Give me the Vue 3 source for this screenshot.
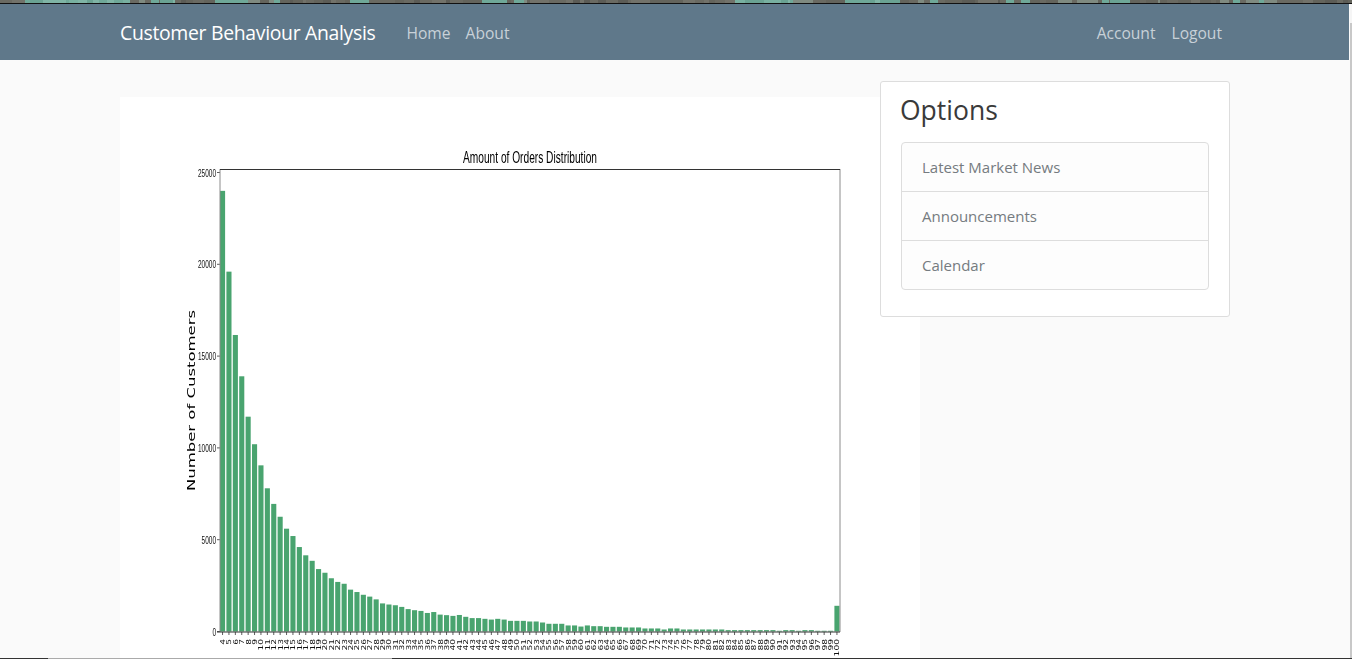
<template>
  <div class="screen">
    <!-- sliver of the desktop wallpaper above the window -->
    <svg class="strip" width="1352" height="3" aria-hidden="true">
      <rect v-for="s in stripCells" :key="s.x" :x="s.x" y="0" :width="s.w" height="3" :fill="s.fill" />
    </svg>
    <div class="window">
      <div class="page">
        <header class="navbar">
          <a class="brand">Customer Behaviour Analysis</a>
          <nav class="nav-left">
            <a class="nav-link">Home</a>
            <a class="nav-link">About</a>
          </nav>
          <nav class="nav-right">
            <a class="nav-link">Account</a>
            <a class="nav-link">Logout</a>
          </nav>
        </header>
        <main class="container">
          <div class="col-main">
            <div class="chart">
              <svg width="800" height="562" viewBox="120 97 800 562" class="plot">
                <text x="530" y="162.5" text-anchor="middle" textLength="134" lengthAdjust="spacingAndGlyphs" class="title">Amount of Orders Distribution</text>
                <text transform="translate(195 491) rotate(-90)" textLength="181" lengthAdjust="spacingAndGlyphs" class="ylabel">Number of Customers</text>

                <g v-for="t in yTicks" :key="t.label">
                  <line x1="217" :y1="t.y" x2="220" :y2="t.y" class="tick" />
                  <text x="216" :y="t.y + 4" text-anchor="end" :textLength="t.len" lengthAdjust="spacingAndGlyphs" class="ytext">{{ t.label }}</text>
                </g>

                <rect v-for="b in bars" :key="b.label" :x="b.x" :y="b.y" width="5.1" :height="b.h" class="bar" />

                <g v-for="b in bars" :key="'t' + b.label">
                  <line :x1="b.x + 2.55" y1="632" :x2="b.x + 2.55" y2="635" class="tick" />
                  <text :transform="`translate(${b.x + 5} 639) rotate(-90)`" text-anchor="end" :textLength="b.label.length * 5.8" lengthAdjust="spacingAndGlyphs" class="xtext">{{ b.label }}</text>
                </g>

                <line x1="220" y1="169" x2="220" y2="632" class="spine-light" />
                <line x1="840" y1="169" x2="840" y2="632" class="spine-light" />
                <line x1="220" y1="169.5" x2="840" y2="169.5" class="spine" />
                <line x1="217" y1="632" x2="840" y2="632" class="spine" />
              </svg>
            </div>
          </div>
          <aside class="col-side">
            <section class="card">
              <h3 class="card-title">Options</h3>
              <ul class="list-group">
                <li v-for="item in options" :key="item" class="list-item">{{ item }}</li>
              </ul>
            </section>
          </aside>
        </main>
      </div>
      <div class="scrollbar"><div class="thumb"></div></div>
    </div>
    <div class="edge">
      <span class="edge-dark-a"></span>
      <span class="edge-light"></span>
      <span class="edge-dark-b"></span>
    </div>
  </div>
</template>

<script setup>
const options = ['Latest Market News', 'Announcements', 'Calendar']

// values read off the chart, order counts 4..100
const values = [
  24000, 19600, 16150, 13900, 11700, 10200, 9050, 7800, 6950, 6250, 5600, 5200, 4600, 4150, 3850, 3400,
  3200, 2900, 2700, 2600, 2280, 2150, 2000, 1900, 1750, 1530, 1470, 1430, 1340, 1220, 1160, 1120, 1010,
  1060, 920, 890, 850, 900, 800, 730, 730, 690, 650, 690, 650, 580, 580, 580, 545, 545, 490, 420, 420,
  420, 330, 330, 270, 330, 290, 290, 255, 255, 255, 220, 220, 220, 165, 165, 165, 110, 165, 165, 110,
  110, 110, 110, 110, 110, 110, 75, 75, 75, 75, 75, 75, 75, 75, 40, 75, 75, 40, 75, 75, 40, 40, 40, 1400
]

const zeroY = 631.5
const perUnit = 91.8 / 5000

const bars = values.map((v, i) => ({
  label: String(i + 4),
  x: 220 + i * 6.4,
  y: zeroY - v * perUnit,
  h: v * perUnit
}))

const yTicks = [0, 5000, 10000, 15000, 20000, 25000].map((v) => ({
  label: String(v),
  y: zeroY - v * perUnit,
  len: String(v).length * 3.6
}))

// rough wallpaper colours: [start x, kind]
const stripRanges = [
  [0, 'g'], [25, 'm'], [130, 'x'], [160, 'm'], [175, 'g'], [215, 'x'], [290, 'g'], [345, 'x'],
  [395, 'g'], [450, 'x'], [530, 'g'], [735, 'm'], [790, 'x'], [870, 'm'], [900, 'x'], [945, 'g'],
  [1000, 'x'], [1110, 'm'], [1130, 'x'], [1160, 'g'], [1220, 'x'], [1290, 'g'], [1352, 'g']
]
const palette = {
  m: ['#6fa898', '#78b0a0', '#6aa292', '#7fb4a5'],
  g: ['#64645c', '#6a6a62', '#72726a', '#5c5c56'],
  x: ['#6fa898', '#64645c', '#7f8a80', '#6a6a62']
}
const stripCells = []
stripRanges.slice(0, -1).forEach(([start, kind], r) => {
  const end = stripRanges[r + 1][0]
  let x = start
  let n = r * 7 + 3
  while (x < end) {
    n = (n * 31 + 17) % 101
    const w = Math.min(3 + (n % 11), end - x)
    stripCells.push({ x, w, fill: palette[kind][n % 4] })
    x += w
  }
})
</script>

<style>
html,
body {
  margin: 0;
  background: #fafafa;
}
</style>

<style scoped>
.screen {
  width: 1352px;
  height: 659px;
  display: flex;
  flex-direction: column;
  overflow: hidden;
  background: #fafafa;
  font-family: "Open Sans", "Noto Sans", sans-serif;
}

.strip {
  display: block;
  flex: none;
}

.window {
  flex: 1;
  min-height: 0;
  display: flex;
  border-top: 1px solid #111;
}

.page {
  width: 1350px;
  flex: none;
  overflow: hidden;
}

.navbar {
  height: 56px;
  margin-right: 1px;
  padding-left: 120px;
  padding-top: 1px;
  box-sizing: border-box;
  display: flex;
  align-items: center;
  background: #5f788a;
}

.brand {
  color: #fff;
  font-size: 19.4px;
  letter-spacing: -0.31px;
  margin-right: 31px;
}

.nav-left {
  display: flex;
  gap: 15px;
}

.nav-right {
  display: flex;
  gap: 16px;
  margin-left: auto;
  margin-right: 127px;
}

.nav-link {
  color: #c8d1d8;
  font-size: 15.6px;
}

.container {
  width: 1140px;
  margin: 0 auto;
  padding-top: 21px;
  display: flex;
}

.col-main {
  width: 760px;
  flex: none;
  padding: 16px 15px 0;
  box-sizing: border-box;
}

.chart {
  width: 800px;
  background: #fff;
}

.plot {
  display: block;
  filter: blur(0.45px);
}

.title {
  font: 17px "Liberation Sans", sans-serif;
  fill: #000;
}

.ylabel {
  font: 11px "DejaVu Sans", sans-serif;
  fill: #000;
}

.ytext {
  font: 10.5px "Liberation Sans", sans-serif;
  fill: #111;
}

.xtext {
  font: 6.8px "DejaVu Sans", sans-serif;
  fill: #111;
}

.bar {
  fill: #49a46f;
}

.tick {
  stroke: #333;
  stroke-width: 0.8;
}

.spine {
  stroke: #333;
  stroke-width: 1;
}

.spine-light {
  stroke: #8c8c8c;
  stroke-width: 1;
}

.col-side {
  width: 380px;
  flex: none;
  padding: 0 15px;
  box-sizing: border-box;
  position: relative;
}

.card {
  height: 236px;
  box-sizing: border-box;
  padding: 9px 20px 10px;
  background: #fff;
  border: 1px solid #ddd;
  border-radius: 3px;
}

.card-title {
  margin: 0 0 13px -1px;
  font-size: 26.5px;
  line-height: 38px;
  font-weight: 400;
  color: #3a3a3a;
}

.list-group {
  margin: 0;
  padding: 0;
  list-style: none;
  border: 1px solid #ddd;
  border-radius: 4px;
  background: #fdfdfd;
}

.list-item {
  height: 48px;
  padding-left: 20px;
  display: flex;
  align-items: center;
  font-size: 15px;
  color: #757b80;
  border-top: 1px solid #ddd;
}

.list-item:first-child {
  border-top: 0;
}

.scrollbar {
  flex: 1;
  background: #f5f5f5;
  padding-top: 19px;
}

.thumb {
  height: 100%;
  background: #c8c8c8;
}

.edge {
  flex: none;
  height: 1px;
  display: flex;
}

.edge-dark-a {
  width: 48px;
  background: #333;
}

.edge-light {
  width: 344px;
  background: #aaa;
}

.edge-dark-b {
  flex: 1;
  background: #333;
}
</style>
